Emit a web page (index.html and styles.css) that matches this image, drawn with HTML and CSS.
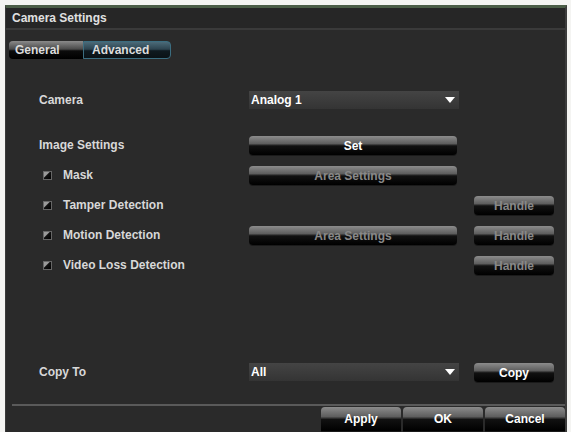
FILE: index.html
```html
<!DOCTYPE html>
<html lang="en">
  <head>
    <meta charset="UTF-8" />
    <meta name="viewport" content="width=device-width, initial-scale=1.0" />
    <title>Camera Settings</title>
    <link rel="stylesheet" href="styles.css">
  </head>
  <body>
    <div class="window">
      <div class="title-bar">Camera Settings</div>

      <!-- タブ -->
      <div class="tabs">
        <button class="tab">General</button>
        <button class="tab active">Advanced</button>
      </div>

      <div class="form">
        <div class="row">
          <span class="label">Camera</span>
          <div class="select"><span>Analog 1</span><i class="arrow"></i></div>
        </div>

        <div class="row row-gap">
          <span class="label">Image Settings</span>
          <button class="btn wide">Set</button>
        </div>

        <div class="row">
          <label class="label check"><span class="box"></span>Mask</label>
          <button class="btn wide disabled">Area Settings</button>
        </div>

        <div class="row">
          <label class="label check"><span class="box"></span>Tamper Detection</label>
          <span class="spacer"></span>
          <button class="btn small disabled">Handle</button>
        </div>

        <div class="row">
          <label class="label check"><span class="box"></span>Motion Detection</label>
          <button class="btn wide disabled">Area Settings</button>
          <button class="btn small disabled">Handle</button>
        </div>

        <div class="row">
          <label class="label check"><span class="box"></span>Video Loss Detection</label>
          <span class="spacer"></span>
          <button class="btn small disabled">Handle</button>
        </div>

        <div class="row copy-row">
          <span class="label">Copy To</span>
          <div class="select"><span>All</span><i class="arrow"></i></div>
          <button class="btn small copy">Copy</button>
        </div>
      </div>

      <div class="footer">
        <button class="btn foot">Apply</button>
        <button class="btn foot">OK</button>
        <button class="btn foot">Cancel</button>
      </div>
    </div>
  </body>
</html>
```

FILE: styles.css
```css
body {
  margin: 0;
  background: #f4f4f2;
  font-family: "Liberation Sans", Arial, sans-serif;
  font-size: 12px;
  font-weight: bold;
  color: #d8d8d8;
}

.window {
  margin: 5px 4px 0 5px;
  height: 427px;
  background: #2a2a2a;
  border-top: 3px solid #4b5d47;
  border-left: 1px solid #3a3a3a;
  border-right: 2px solid #3c3c3c;
  box-sizing: border-box;
  display: flex;
  flex-direction: column;
}

/* タイトル */
.title-bar {
  height: 20px;
  line-height: 20px;
  padding-left: 6px;
  background: #262626;
  border-bottom: 2px solid #3a3a3a;
  color: #e0e0e0;
}

/* タブ */
.tabs {
  display: flex;
  margin: 11px 0 0 3px;
  height: 18px;
}

.tab {
  font: inherit;
  color: #dcdcdc;
  border: none;
  padding: 0 6px;
  height: 18px;
  background: linear-gradient(#8a8a8a 0%, #4a4a4a 45%, #0c0c0c 55%, #000 100%);
  border-radius: 4px 0 0 4px;
  width: 74px;
  text-align: left;
}

.tab.active {
  width: 88px;
  padding-left: 8px;
  background: linear-gradient(#4b6a78 0%, #2d4450 45%, #0f1a20 55%, #0a1216 100%);
  border: 1px solid #3b6d80;
  border-radius: 0 4px 4px 0;
}

/* フォーム */
.form {
  flex: 1;
  padding: 26px 0 0 33px;
  display: flex;
  flex-direction: column;
}

.row {
  display: flex;
  align-items: center;
  height: 30px;
}

.row-gap {
  margin-top: 15px;
}

.copy-row {
  margin-top: auto;
  margin-bottom: 17px;
}

.label {
  width: 210px;
  flex: none;
  display: flex;
  align-items: center;
}

.check {
  padding-left: 4px;
  box-sizing: border-box;
}

.box {
  width: 7px;
  height: 7px;
  margin-right: 11px;
  background: linear-gradient(135deg, #9a9a9a 0%, #9a9a9a 35%, #111 45%, #000 100%);
  border: 1px solid #666;
}

.spacer {
  width: 208px;
  flex: none;
}

.select {
  width: 210px;
  height: 18px;
  flex: none;
  display: flex;
  align-items: center;
  justify-content: space-between;
  padding: 0 4px 0 2px;
  box-sizing: border-box;
  background: linear-gradient(#444 0%, #3c3c3c 50%, #343434 100%);
  color: #fff;
}

.arrow {
  width: 0;
  height: 0;
  border-left: 5px solid transparent;
  border-right: 5px solid transparent;
  border-top: 6px solid #fff;
}

.btn {
  font: inherit;
  color: #fff;
  border: none;
  border-radius: 4px;
  height: 19px;
  padding: 2px 0 0;
  background: linear-gradient(#8c8c8c 0%, #5e5e5e 40%, #111 52%, #000 100%);
  box-shadow: 0 1px 0 #1a1a1a;
  flex: none;
}

.btn.disabled {
  color: #888;
}

.wide {
  width: 208px;
}

.small {
  width: 80px;
  margin-left: 17px;
}

.copy {
  margin-left: 15px;
}

/* フッター */
.footer {
  display: flex;
  justify-content: flex-end;
  gap: 2px;
  margin: 0 0 0 6px;
  padding-top: 1px;
  border-top: 2px solid #5a5a5a;
  height: 25px;
}

.foot {
  width: 80px;
  height: 24px;
  padding: 0;
  border-radius: 4px 4px 0 0;
}
```
